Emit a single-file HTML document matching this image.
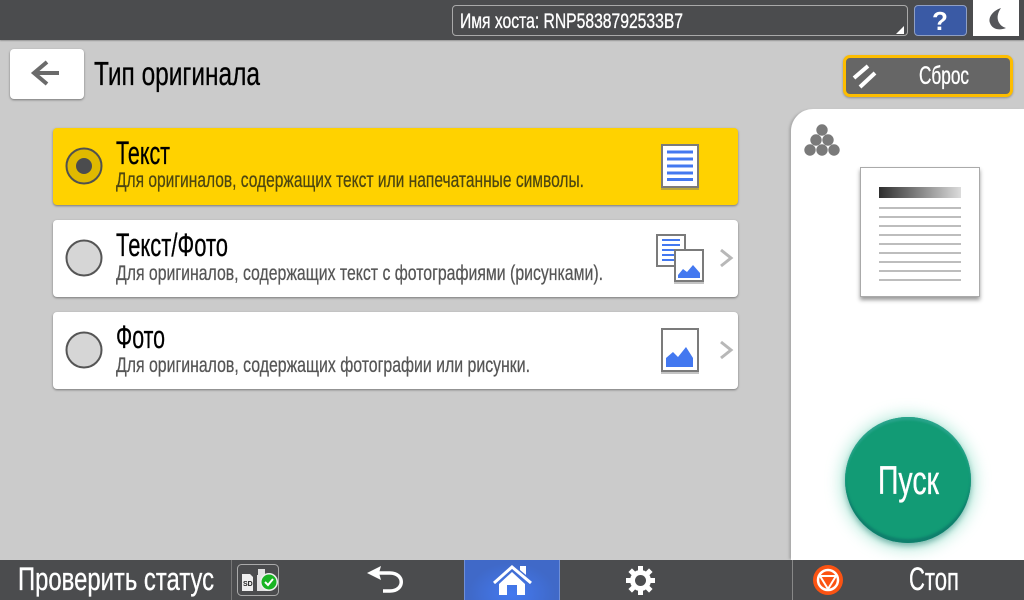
<!DOCTYPE html>
<html><head><meta charset="utf-8"><style>
html,body{margin:0;padding:0;width:1024px;height:600px;overflow:hidden;background:#cbcbcb}
.a{position:absolute;box-sizing:border-box}
svg{position:absolute;left:0;top:0}
text{font-family:"Liberation Sans",sans-serif}
.w{stroke:#fff;stroke-width:.35}
.k{stroke:#000;stroke-width:.3}
.g{stroke:#555;stroke-width:.25}
</style></head><body>
<div class="a" style="left:0;top:0;width:1024px;height:40px;background:#4b4c4e;box-shadow:0 1px 1px #999"></div>
<div class="a" style="left:452px;top:5px;width:456px;height:31px;border:1px solid #a9a9a9;border-radius:4px"></div>
<div class="a" style="left:914px;top:5px;width:53px;height:31px;background:#3a5aa5;border:1px solid #8f9fc4;border-radius:4px"></div>
<div class="a" style="left:973px;top:0;width:46px;height:36px;background:#fff"></div>
<div class="a" style="left:10px;top:49px;width:74px;height:50px;background:#fff;border-radius:4px;box-shadow:0 1px 2px #777"></div>
<div class="a" style="left:843px;top:55px;width:170px;height:42px;background:#666;border:3px solid #fdbd00;border-radius:7px;box-shadow:0 1px 2px rgba(0,0,0,.3)"></div>
<div class="a" style="left:53px;top:128px;width:685px;height:77px;background:#ffd200;border-radius:4px;box-shadow:0 1px 2px #777"></div>
<div class="a" style="left:53px;top:220px;width:685px;height:77px;background:#fff;border-radius:4px;box-shadow:0 1px 2px #777"></div>
<div class="a" style="left:53px;top:312px;width:685px;height:77px;background:#fff;border-radius:4px;box-shadow:0 1px 2px #777"></div>
<div class="a" style="left:791px;top:109px;width:233px;height:451px;background:#fff;border-top-left-radius:22px;box-shadow:-3px 0 2px -1px #aaa"></div>
<div class="a" style="left:860px;top:167px;width:120px;height:130px;background:#fff;border:1px solid #aaa;box-shadow:0 3px 4px #999"></div>
<div class="a" style="left:879px;top:187px;width:82px;height:11px;background:linear-gradient(90deg,#2e2e2e,#dcdcdc)"></div>
<div class="a" style="left:845px;top:417px;width:126px;height:126px;border-radius:50%;background:#129b75;box-shadow:inset 0 3px 2px #2aa48c,inset 0 -4px 2px #0f7f6c,0 3px 6px rgba(15,110,100,.45),0 2px 14px 6px rgba(110,215,185,.4)"></div>
<div class="a" style="left:0;top:560px;width:1024px;height:40px;background:#4b4c4e"></div>
<div class="a" style="left:464px;top:560px;width:96px;height:40px;background:radial-gradient(ellipse at 50% 85%,#4379f0,#4069c8 65%);border-left:1px solid #6f8fd8;border-right:1px solid #6f8fd8"></div>

<svg width="1024" height="600" viewBox="0 0 1024 600">
<text class="w" x="460" y="28" font-size="21" fill="#fff" textLength="223" lengthAdjust="spacingAndGlyphs">Имя хоста: RNP5838792533B7</text>
<path d="M904 26V34H896Z" fill="#fff"/>
<text x="940" y="30" font-size="26" font-weight="bold" fill="#fff" text-anchor="middle">?</text>
<path d="M1001 8C992 11 988 18 990 23C992 29 999 31 1006 28C999 26 994 18 1001 8Z" fill="#55565a"/>
<path d="M59 73H35M47 62L34 73L47 84" fill="none" stroke="#6b6b6b" stroke-width="4"/>
<text class="k" x="94" y="85" font-size="33" fill="#000" textLength="166" lengthAdjust="spacingAndGlyphs">Тип оригинала</text>
<path d="M854 78L868 66M860 87L875 73" stroke="#fff" stroke-width="4" fill="none"/>
<text class="w" x="919" y="84" font-size="25" fill="#fff" textLength="50" lengthAdjust="spacingAndGlyphs">Сброс</text>

<circle cx="84" cy="166" r="17.500" fill="#e0b900" stroke="#50514f" stroke-width="2"/>
<circle cx="84" cy="166" r="8" fill="#4b4c4e"/>
<text class="k" x="116" y="164" font-size="32" fill="#000" textLength="54" lengthAdjust="spacingAndGlyphs">Текст</text>
<text x="116" y="187" font-size="21" fill="#4d4610" stroke="#4d4610" stroke-width=".25" textLength="468" lengthAdjust="spacingAndGlyphs">Для оригиналов, содержащих текст или напечатанные символы.</text>
<g>
<rect x="662" y="145" width="36" height="42" fill="#fff" stroke="#7b7b7b" stroke-width="2"/>
<rect x="661" y="188" width="38" height="2" fill="#bca838"/>
<path d="M667 152H693M667 159H693M667 166H693M667 173H693M667 179.500H693" stroke="#4378f0" stroke-width="3"/>
</g>

<circle cx="84" cy="258" r="17.500" fill="#d6d6d6" stroke="#555" stroke-width="2"/>
<text class="k" x="116" y="256" font-size="32" fill="#000" textLength="112" lengthAdjust="spacingAndGlyphs">Текст/Фото</text>
<text class="g" x="116" y="280" font-size="21" fill="#555" textLength="487" lengthAdjust="spacingAndGlyphs">Для оригиналов, содержащих текст с фотографиями (рисунками).</text>
<g>
<rect x="657" y="235" width="28" height="31" fill="#fff" stroke="#7b7b7b" stroke-width="2"/>
<path d="M662 240H680M662 245H680M662 250H680M662 255H680M662 260H680" stroke="#4378f0" stroke-width="2"/>
<rect x="675" y="250" width="28" height="31" fill="#fff" stroke="#7b7b7b" stroke-width="2"/>
<rect x="674" y="282" width="30" height="2" fill="#c4c4c4"/>
<path d="M678 278V275L683 269L687 272L693 265L700 273V278Z" fill="#4378f0"/>
</g>
<path d="M721 250L731 258L721 266" fill="none" stroke="#b8b8b8" stroke-width="3"/>

<circle cx="84" cy="350" r="17.500" fill="#d6d6d6" stroke="#555" stroke-width="2"/>
<text class="k" x="116" y="348" font-size="32" fill="#000" textLength="49" lengthAdjust="spacingAndGlyphs">Фото</text>
<text class="g" x="116" y="372" font-size="21" fill="#555" textLength="414" lengthAdjust="spacingAndGlyphs">Для оригиналов, содержащих фотографии или рисунки.</text>
<g>
<rect x="662" y="329" width="36" height="42" fill="#fff" stroke="#7b7b7b" stroke-width="2"/>
<rect x="661" y="372" width="38" height="2" fill="#c4c4c4"/>
<path d="M666 367V358L673 352L678 357L686 347L693 358V367Z" fill="#4378f0"/>
</g>
<path d="M721 342L731 350L721 358" fill="none" stroke="#b8b8b8" stroke-width="3"/>

<g fill="#7a7a7a">
<circle cx="822" cy="130" r="5.700"/><circle cx="816" cy="140" r="5.700"/><circle cx="828" cy="140" r="5.700"/>
<circle cx="810" cy="150" r="5.700"/><circle cx="822" cy="150" r="5.700"/><circle cx="834" cy="150" r="5.700"/>
</g>
<path d="M879 208H961M879 217H961M879 226H961M879 235H961M879 244H961M879 253H961M879 262H961M879 271H961M879 280H961" stroke="#bdbdbd" stroke-width="2"/>

<text class="w" x="878" y="494" font-size="40" fill="#fff" textLength="61" lengthAdjust="spacingAndGlyphs">Пуск</text>

<text class="w" x="18" y="590" font-size="32" fill="#fff" textLength="196" lengthAdjust="spacingAndGlyphs">Проверить статус</text>
<path d="M231.500 560V600" stroke="#777"/>
<rect x="237.500" y="564.500" width="41" height="31" rx="4" fill="none" stroke="#aaa"/>
<path d="M242 574H250L253 577V591H242Z" fill="#efefef"/>
<text x="243" y="586" font-size="7" font-weight="bold" fill="#222">SD</text>
<path d="M258 569H265V575H268V591H257V575H258Z" fill="#e2e2e2"/>
<circle cx="269" cy="582" r="9" fill="#efefef"/>
<circle cx="269" cy="582" r="7.500" fill="#18b423"/>
<path d="M265 582L268 585L273 579" fill="none" stroke="#fff" stroke-width="2"/>

<path d="M367 573L381 566L379 573L381 580Z" fill="#fff"/>
<path d="M376 573H390C405 573 405 591 390 591H383" fill="none" stroke="#fff" stroke-width="3.500"/>

<path d="M494 583L512 567L531 583" fill="none" stroke="#fff" stroke-width="3"/>
<path d="M520 570V566H526V575Z" fill="#fff"/>
<path d="M499 595V584L512 572L525 584V595H517V585H507V595Z" fill="#fff"/>

<g stroke="#fff" stroke-width="5">
<path d="M640.500 566V595M626 580.500H655M630.200 570.200L650.800 590.800M650.800 570.200L630.200 590.800"/>
</g>
<circle cx="640.500" cy="580.500" r="10.500" fill="#fff"/>
<circle cx="640.500" cy="580.500" r="5.500" fill="#4b4c4e"/>

<path d="M792.500 560V600" stroke="#888"/>
<circle cx="828" cy="580" r="15" fill="#fb5313"/>
<circle cx="828" cy="580" r="10" fill="none" stroke="#fff" stroke-width="2.500"/>
<path d="M820 576H836L828 589Z" fill="none" stroke="#fff" stroke-width="2"/>
<text class="w" x="909" y="590" font-size="32" fill="#fff" textLength="50" lengthAdjust="spacingAndGlyphs">Стоп</text>
</svg>
</body></html>
